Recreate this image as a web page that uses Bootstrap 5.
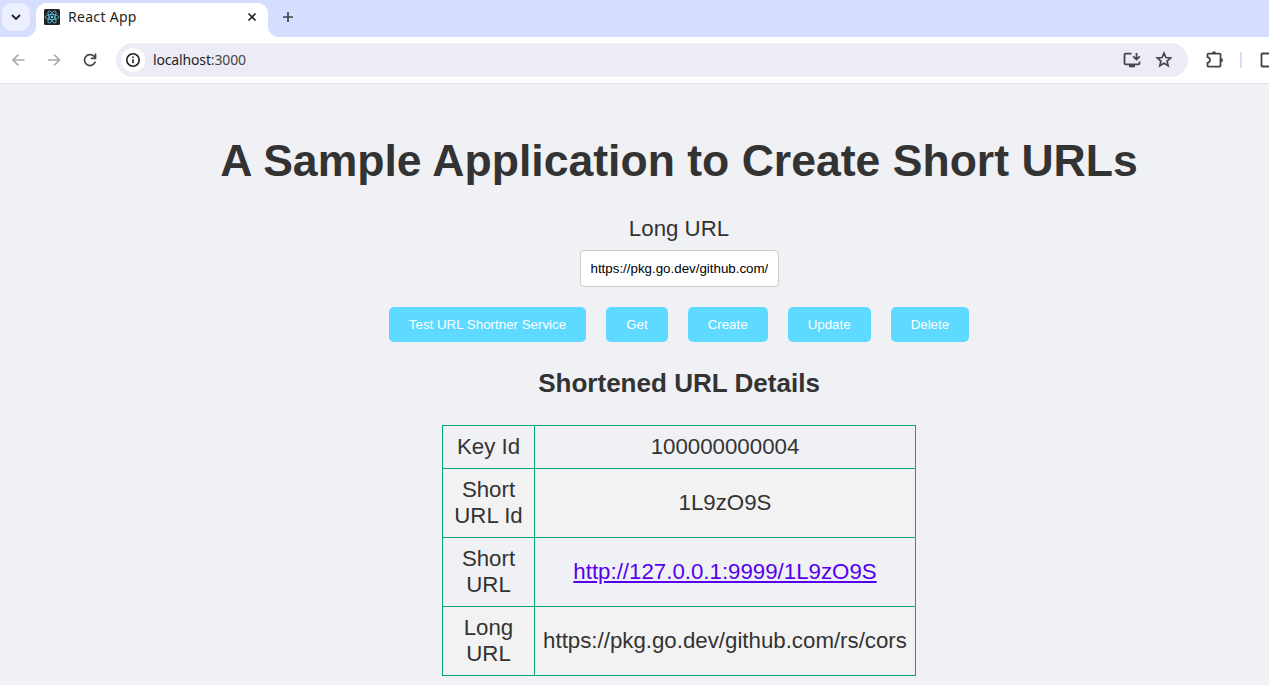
<!DOCTYPE html>
<html lang="en">
<head>
<meta charset="utf-8">
<title>React App</title>
<link href="https://cdn.jsdelivr.net/npm/bootstrap@5.3.0/dist/css/bootstrap.min.css" rel="stylesheet">
<style>
html, body { height: 100%; overflow: hidden; }
body { background: #f0f1f5; font-family: "Liberation Sans", Arial, sans-serif; color: #333; }
.chrome-ui { font-family: "Noto Sans", sans-serif; color: #1f1f1f; font-size: 14px; }
.tabstrip { height: 37px; background: #d5deff; padding-left: 2px; }
.tab-search { width: 28px; height: 28px; margin-top: 3px; border-radius: 10px; background: #ebefff; }
.tab-corner { width: 6px; height: 37px; }
.browser-tab { width: 232px; height: 34px; margin-top: 3px; background: #fff; border-radius: 10px 10px 0 0; padding: 0 8px; position: relative; }
.browser-tab::before, .browser-tab::after { content: ""; position: absolute; bottom: 0; width: 10px; height: 10px; }
.browser-tab::before { left: -10px; background: radial-gradient(circle at 0 0, transparent 9.5px, #fff 10px); }
.browser-tab::after { right: -10px; background: radial-gradient(circle at 100% 0, transparent 9.5px, #fff 10px); }
.tab-title { line-height: 28px; height: 28px; margin-left: 8px; letter-spacing: .3px; }
.toolbar { height: 47px; border-bottom: 1px solid #dfe1e6; background: #fff; overflow: hidden; }
.toolbar > * { flex-shrink: 0; }
.address { height: 34px; width: 1072px; border-radius: 17px; background: #ececf6; padding: 0 16px 0 5px; }
.site-info { width: 24px; height: 24px; border-radius: 50%; background: #fff; }
.address-text { margin: 0 0 2px 8px; letter-spacing: -.15px; }
.address-port { color: #474747; }
.page-view { width: 1358px; font-size: 22.28px; line-height: 26px; padding-top: 51px; }
.page-title { font-size: 44.56px; line-height: 52px; font-weight: 700; }
.url-input { width: 199px; height: 37px; padding: 0 10px; border: 1px solid #ccc; border-radius: 4px; font-size: 13.333px; color: #000; background: #fff; margin-top: 8px; }
.action { height: 35px; padding: 0 20px; border: 0; border-radius: 5px; background: #5ed9ff; color: #fff; font-size: 13.333px; line-height: 35px; }
.details-title { font-size: 26.06px; line-height: 30px; font-weight: 700; }
.details { width: 474px; table-layout: fixed; border-collapse: collapse; }
.details td { border: 1px solid #04a67c; padding: 8px; text-align: center; vertical-align: middle; }
.details tr:nth-child(even) { background: #f2f2f2; }
.details a { color: #5500ee; }
</style>
</head>
<body>
<header class="chrome-ui">
  <div class="tabstrip d-flex">
    <div class="tab-search d-flex align-items-center justify-content-center">
      <svg width="10" height="6" viewBox="0 0 10 6" fill="none" stroke="#1f1f1f" stroke-width="1.8"><path d="M1 1l4 4 4-4"/></svg>
    </div>
    <div class="tab-corner"></div>
    <div class="browser-tab d-flex">
      <svg width="16" height="16" viewBox="0 0 16 16" style="margin-top:6px" fill="none" stroke="#61dafb" stroke-width=".7"><rect width="16" height="16" rx="1.5" fill="#222" stroke="none"/><ellipse cx="8" cy="8" rx="6.800" ry="2.600"/><ellipse cx="8" cy="8" rx="6.800" ry="2.600" transform="rotate(60 8 8)"/><ellipse cx="8" cy="8" rx="6.800" ry="2.600" transform="rotate(120 8 8)"/><circle cx="8" cy="8" r="1.200" fill="#61dafb" stroke="none"/></svg>
      <span class="tab-title">React App</span>
      <svg class="ms-auto" width="16" height="28" viewBox="0 0 16 28" stroke="#1f1f1f" stroke-width="1.6"><path d="M4.500 10.500l7 7M11.500 10.500l-7 7"/></svg>
    </div>
    <svg class="ms-2" width="24" height="34" viewBox="0 0 24 34" stroke="#444" stroke-width="1.7"><path d="M12 12v10M7 17h10"/></svg>
  </div>
  <div class="toolbar d-flex align-items-center">
    <svg width="116" height="46" viewBox="0 0 116 46" fill="none" stroke="#a9a9a9" stroke-width="1.7"><path d="M24.500 23H13M18.500 17.500L13 23l5.500 5.500"/><path d="M48 23h11.500M54 17.500l5.500 5.500-5.500 5.500"/><path stroke="#444746" d="M95.300 24.500a5.500 5.500 0 1 1-1.400-5.300l1.500 1.600"/><path stroke="#444746" d="M95.500 16.500v4.800H90.800"/></svg>
    <div class="address d-flex align-items-center">
      <div class="site-info d-flex align-items-center justify-content-center">
        <svg width="16" height="16" viewBox="0 0 16 16" fill="none" stroke="#1f1f1f" stroke-width="1.6"><circle cx="8" cy="8" r="6.200"/><path d="M8 7.300v4M8 4.500v1.600"/></svg>
      </div>
      <span class="address-text">localhost<span class="address-port">:3000</span></span>
      <svg class="ms-auto" width="50" height="20" viewBox="0 0 50 20" fill="none" stroke="#444746" stroke-width="1.800"><path d="M9.500 3.700H3.500Q2.500 3.700 2.500 4.700V13.300Q2.500 14.300 3.500 14.300H16.500Q17.500 14.300 17.500 13.300V11.500"/><path d="M7 16h6" stroke-width="2.600"/><path d="M14.500 3v6.200M11.200 6.300l3.300 3.300L17.800 6.300"/><path d="M42 3.100l1.900 4.400 4.800.4-3.600 3.200 1.100 4.700-4.200-2.500-4.200 2.500 1.100-4.700-3.600-3.200 4.800-.4z" stroke-width="1.700"/></svg>
    </div>
    <svg width="81" height="46" viewBox="0 0 81 46" fill="none" stroke="#444746" stroke-width="1.800"><path d="M20.400 16.700H31.600Q32.500 16.700 32.500 17.600V28.700Q32.500 29.600 31.600 29.600H20.400Q19.500 29.600 19.500 28.700V26Q22 25.400 22 23.100T19.500 20.200V17.600Q19.500 16.700 20.400 16.700z"/><path d="M24 16.200a2 2 0 0 1 4 0zM33 21.200a2 2 0 0 1 0 4z" fill="#444746" stroke="none"/><path d="M53 15v16" stroke="#d5deff" stroke-width="2"/><path d="M81 16.500H74.300Q73.500 16.500 73.500 17.300V28.700Q73.500 29.500 74.300 29.500H81"/></svg>
  </div>
</header>
<main class="page-view d-flex flex-column align-items-center">
  <h1 class="page-title mb-0">A Sample Application to Create Short URLs</h1>
  <label for="longUrl" style="margin-top:29px">Long URL</label>
  <input id="longUrl" class="url-input" type="text" value="https://pkg.go.dev/github.com/rs/cors">
  <div class="actions d-flex" style="gap:20px;margin-top:20px">
    <button class="action">Test URL Shortner Service</button>
    <button class="action">Get</button>
    <button class="action">Create</button>
    <button class="action">Update</button>
    <button class="action">Delete</button>
  </div>
  <h3 class="details-title mb-0" style="margin-top:26px">Shortened URL Details</h3>
  <table class="details" style="margin-top:27px">
    <colgroup><col style="width:92px"><col></colgroup>
    <tbody>
      <tr><td>Key Id</td><td>100000000004</td></tr>
      <tr><td>Short URL Id</td><td>1L9zO9S</td></tr>
      <tr><td>Short URL</td><td><a href="#">http://127.0.0.1:9999/1L9zO9S</a></td></tr>
      <tr><td>Long URL</td><td>https://pkg.go.dev/github.com/rs/cors</td></tr>
    </tbody>
  </table>
</main>
<script src="https://cdn.jsdelivr.net/npm/bootstrap@5.3.0/dist/js/bootstrap.bundle.min.js"></script>
</body>
</html>
